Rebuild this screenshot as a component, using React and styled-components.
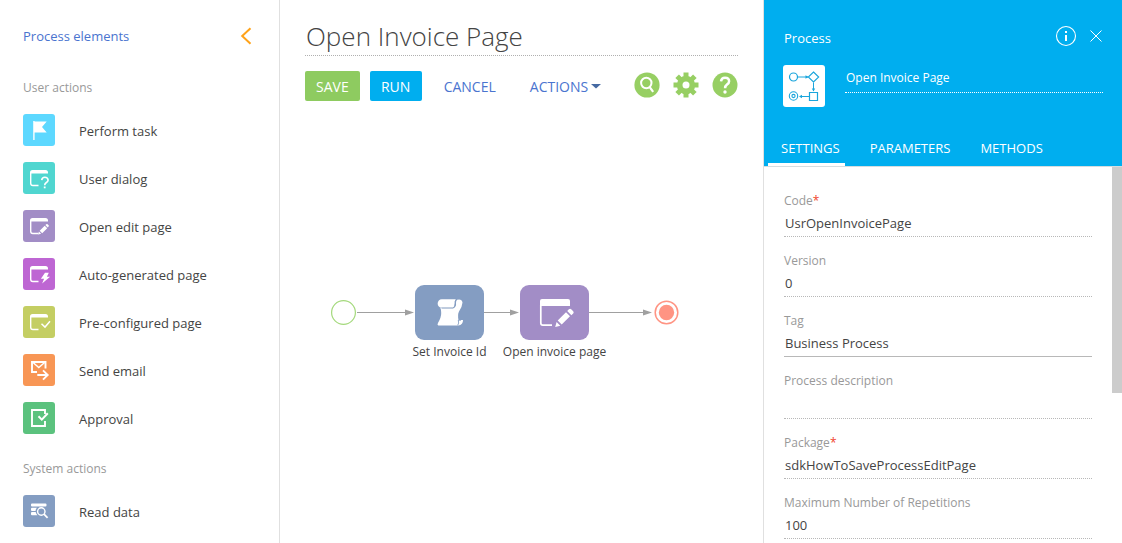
import React from "react";
import styled, { createGlobalStyle, css } from "styled-components";

const GlobalStyle = createGlobalStyle`
  *, *::before, *::after { box-sizing: border-box; }
  body {
    margin: 0;
    background: #fff;
    color: #444;
    font-family: "Open Sans", "Noto Sans", sans-serif;
    font-size: 13px;
    line-height: 20px;
  }
  button, input, textarea { font: inherit; color: inherit; }
`;

const bareButton = css`
  border: 0;
  padding: 0;
  margin: 0;
  background: none;
  cursor: pointer;
`;

const Shell = styled.div`
  display: flex;
  height: 100vh;
  overflow: hidden;
`;

/* ---------- Element palette ---------- */

const Palette = styled.aside`
  flex: 0 0 280px;
  padding: 26px 27px 0 23px;
  border-right: 1px solid #e0e0e0;
  overflow: hidden;
`;

const PaletteHeader = styled.header`
  display: flex;
  align-items: center;
  justify-content: space-between;
  height: 20px;
  margin-bottom: 32px;
`;

const PaletteTitle = styled.h2`
  margin: 0;
  font-size: 13px;
  font-weight: 400;
  color: #4a74cf;
`;

const CollapseButton = styled.button`
  ${bareButton}
  display: flex;
`;

const Section = styled.section`
  margin-bottom: 25px;
`;

const SectionTitle = styled.h3`
  margin: 0 0 16px;
  font-size: 12px;
  font-weight: 400;
  color: #999;
`;

const ElementList = styled.ul`
  display: flex;
  flex-direction: column;
  gap: 16px;
  margin: 0;
  padding: 0;
  list-style: none;
`;

const ElementButton = styled.button`
  ${bareButton}
  display: flex;
  align-items: center;
  gap: 24px;
  width: 100%;
  text-align: left;
`;

const ElementTile = styled.span`
  display: flex;
  width: 32px;
  height: 32px;
  border-radius: 3px;
  background: ${(p) => p.$color};
`;

const ElementName = styled.span`
  padding-top: 2px;
`;

/* ---------- Designer ---------- */

const Designer = styled.main`
  flex: 1;
  min-width: 0;
  display: flex;
  flex-direction: column;
`;

const DesignerHeader = styled.header`
  padding: 16px 25px 0;
`;

const TitleInput = styled.input`
  display: block;
  width: 100%;
  height: 40px;
  padding: 0 1px;
  border: 0;
  border-bottom: 1px dotted #b0b0b0;
  outline: 0;
  background: none;
  font-size: 26px;
  font-weight: 300;
`;

const Toolbar = styled.div`
  display: flex;
  align-items: flex-start;
  justify-content: space-between;
  margin-top: 15px;
`;

const ToolbarGroup = styled.div`
  display: flex;
  align-items: center;
  gap: ${(p) => p.$gap}px;
`;

const ActionButton = styled.button`
  ${bareButton}
  display: flex;
  align-items: center;
  justify-content: center;
  gap: 3px;
  min-width: 52px;
  height: 30px;
  padding: 2px ${(p) => (p.$fill ? 11 : 12)}px 0;
  border-radius: 2px;
  background: ${(p) => p.$fill || "none"};
  color: ${(p) => (p.$fill ? "#fff" : "#4a74cf")};
  font-size: 14px;
`;

const IconButton = styled.button`
  ${bareButton}
  display: flex;
`;

const Canvas = styled.div`
  position: relative;
  flex: 1;
  overflow: hidden;
`;

const Flows = styled.svg`
  position: absolute;
  left: 0;
  top: 0;
  overflow: visible;
`;

const Node = styled.div`
  position: absolute;
  left: ${(p) => p.$x}px;
  top: ${(p) => p.$y}px;
  display: flex;
  flex-direction: column;
  align-items: center;
  width: ${(p) => p.$w}px;
`;

const NodeBox = styled.div`
  display: flex;
  width: 69px;
  height: 55px;
  border-radius: 9px;
  background: ${(p) => p.$color};
`;

const NodeLabel = styled.span`
  margin-top: 2px;
  font-size: 12px;
  white-space: nowrap;
`;

/* ---------- Properties ---------- */

const Properties = styled.aside`
  flex: 0 0 359px;
  display: flex;
  flex-direction: column;
  border-left: 1px solid #e0e0e0;
`;

const PropertiesHeader = styled.header`
  flex: none;
  background: #00aeef;
  color: #fff;
  border-bottom: 1px solid #d5dde0;
`;

const HeaderTop = styled.div`
  display: flex;
  align-items: center;
  justify-content: space-between;
  padding: 24px 19px 0 20px;
`;

const PropertiesTitle = styled.h2`
  margin: 0;
  padding-top: 4px;
  font-size: 13px;
  font-weight: 400;
`;

const HeaderIdentity = styled.div`
  display: flex;
  align-items: flex-start;
  gap: 20px;
  padding: 17px 19px 0;
`;

const ProcessBadge = styled.div`
  display: flex;
  flex: none;
  width: 42px;
  height: 42px;
  border-radius: 3px;
  background: #fff;
`;

const NameInput = styled.input`
  flex: 1;
  min-width: 0;
  height: 28px;
  padding: 0 1px 2px;
  border: 0;
  border-bottom: 1px dotted #fff;
  outline: 0;
  background: none;
  color: #fff;
  font-size: 12px;
`;

const Tabs = styled.div`
  display: flex;
  gap: 12px;
  margin-top: 31px;
  padding-left: 4px;
`;

const Tab = styled.button`
  ${bareButton}
  height: 28px;
  padding: 0 5px 8px 13px;
  border-bottom: 3px solid ${(p) => (p.$active ? "#fff" : "transparent")};
`;

const PropertiesBody = styled.div`
  flex: 1;
  min-height: 0;
  display: flex;
  overflow: hidden;
`;

const Fields = styled.form`
  flex: 1;
  min-width: 0;
  display: flex;
  flex-direction: column;
  gap: 14px;
  padding: 24px 20px 0;
`;

const Field = styled.div`
  display: flex;
  flex-direction: column;
`;

const FieldLabel = styled.label`
  color: #999;
  font-size: 12px;
`;

const Required = styled.span`
  color: #f0442c;
`;

const fieldControl = css`
  width: 100%;
  border: 0;
  border-bottom: 1px ${(p) => (p.$solid ? "solid" : "dotted")} #b8b8b8;
  outline: 0;
  background: none;
  padding: 0 1px 2px;
`;

const FieldInput = styled.input`
  ${fieldControl}
  height: 26px;
`;

const FieldArea = styled.textarea`
  ${fieldControl}
  display: block;
  height: 28px;
  resize: none;
  overflow: hidden;
`;

const ScrollThumb = styled.div`
  flex: 0 0 10px;
  height: 60%;
  background: #ccc;
`;

/* ---------- Icons ---------- */

const Icon32 = ({ children }) => (
  <svg width="32" height="32" viewBox="0 0 32 32" fill="none" aria-hidden="true">{children}</svg>
);

const PageFrame = () => (
  <>
    <path d="M7 11.600V10.500a2.500 2.500 0 0 1 2.500-2.500h13a2.500 2.500 0 0 1 2.500 2.500V11.600z" fill="#fff" />
    <path d="M7.700 11v10.300q0 2.200 2.200 2.200h5.600" stroke="#fff" strokeWidth="1.400" />
  </>
);

const FlagIcon = () => (
  <Icon32>
    <path d="M10.200 7h1.400v19h-1.400z" fill="#fff" />
    <path d="M11 7.500h12.700L19 13l4.700 5.500H11z" fill="#fff" />
  </Icon32>
);

const DialogIcon = () => (
  <Icon32>
    <PageFrame />
    <path d="M18.700 18.200q.3-3 3.200-3t3.200 2.800q0 1.500-1.700 2.500-1.700 1-1.700 2.700" stroke="#fff" strokeWidth="1.600" />
    <path d="M20.800 24.500h1.800v1.800h-1.800z" fill="#fff" />
  </Icon32>
);

const EditPageIcon = () => (
  <Icon32>
    <PageFrame />
    <path d="M15.200 24.500l.7-2.900 2.200 2.200zM16.700 20.800l5-5 2.500 2.500-5 5zM22.400 15.100l.9-.9q.7-.5 1.300.1l1 1q.5.600 0 1.200l-.9.900z" fill="#fff" />
  </Icon32>
);

const AutoPageIcon = () => (
  <Icon32>
    <PageFrame />
    <path d="M22 14.800h3.800l-1.900 4h3.200l-8 6.700 2-4.700h-3.200z" fill="#fff" />
  </Icon32>
);

const ConfiguredPageIcon = () => (
  <Icon32>
    <PageFrame />
    <path d="M18.500 17.700l3.500 3.400 5-5.800" stroke="#fff" strokeWidth="1.500" />
  </Icon32>
);

const EmailIcon = () => (
  <Icon32>
    <path d="M14 18H9V8h13.500v6.500" stroke="#fff" strokeWidth="1.900" />
    <path d="M10 8.500l5.800 5 5.800-5" stroke="#fff" strokeWidth="1.400" />
    <path d="M14.300 21h9.500M20 16.300l4.700 4.700-4.700 4.700" stroke="#fff" strokeWidth="1.900" />
  </Icon32>
);

const ApprovalIcon = () => (
  <Icon32>
    <path d="M22 12V8H9v16h13v-5" stroke="#fff" strokeWidth="1.900" />
    <path d="M15.500 14.300l3.300 3.300 6-6.300" stroke="#fff" strokeWidth="2" />
  </Icon32>
);

const ReadDataIcon = () => (
  <Icon32>
    <path d="M9 8.500h13.500q1 0 1 1v1q0 1-1 1H9q-1 0-1-1v-1q0-1 1-1zM9 12.700h5q-1.300 1.300-1.500 3.200H9q-1 0-1-1v-1.200q0-1 1-1zM9 17h3.700q.4 1.800 1.700 3.200H9q-1 0-1-1V18q0-1 1-1z" fill="#fff" />
    <circle cx="18.300" cy="16.500" r="3.700" stroke="#fff" strokeWidth="1.400" />
    <path d="M21 19.200l3.600 3.600" stroke="#fff" strokeWidth="1.800" />
  </Icon32>
);

const ChevronLeftIcon = () => (
  <svg width="12" height="18" viewBox="0 0 12 18" fill="none" aria-hidden="true">
    <path d="M10.500 1.200L2.200 9l8.300 7.800" stroke="#ffa31a" strokeWidth="2" />
  </svg>
);

const CaretIcon = () => (
  <svg width="10" height="6" viewBox="0 0 10 6" aria-hidden="true">
    <path d="M0 0h10L5 4.500z" fill="#456aa3" />
  </svg>
);

const SearchIcon = () => (
  <svg width="26" height="28" viewBox="0 0 26 28" fill="none" aria-hidden="true">
    <circle cx="13" cy="14" r="12.600" fill="#97cf63" />
    <circle cx="12.300" cy="12" r="5.200" stroke="#fff" strokeWidth="2" />
    <path d="M15.500 15.800l3.700 5" stroke="#fff" strokeWidth="2.200" />
  </svg>
);

const GearIcon = () => (
  <svg width="26" height="28" viewBox="0 0 26 28" fill="none" aria-hidden="true">
    <g fill="#97cf63">
      {[0, 45, 90, 135].map((angle) => (
        <rect key={angle} x="10.500" y="1.500" width="5" height="25" transform={`rotate(${angle} 13 14)`} />
      ))}
      <circle cx="13" cy="14" r="9.200" />
    </g>
    <circle cx="13" cy="14" r="3.500" fill="#fff" />
  </svg>
);

const HelpIcon = () => (
  <svg width="26" height="28" viewBox="0 0 26 28" fill="none" aria-hidden="true">
    <circle cx="13" cy="14" r="12.500" fill="#97cf63" />
    <path d="M9 10.300q.4-3.600 4-3.600 4.100 0 4.100 3.500 0 1.800-2.100 3.400-1.900 1.400-1.900 3.600" stroke="#fff" strokeWidth="2.500" />
    <circle cx="13" cy="21" r="1.700" fill="#fff" />
  </svg>
);

const InfoIcon = () => (
  <svg width="22" height="22" viewBox="0 0 22 22" fill="none" aria-hidden="true">
    <circle cx="11" cy="11" r="9.500" stroke="#fff" strokeWidth="1.100" />
    <path d="M10 6h2v2h-2zM10 10h2v6h-2z" fill="#fff" />
  </svg>
);

const CloseIcon = () => (
  <svg width="14" height="14" viewBox="0 0 14 14" fill="none" aria-hidden="true">
    <path d="M1.500 1.500l11 11M12.500 1.500l-11 11" stroke="#fff" strokeWidth="1" />
  </svg>
);

const ProcessIcon = () => (
  <svg width="42" height="42" viewBox="0 0 42 42" fill="none" stroke="#1aa5dc" aria-hidden="true">
    <circle cx="10.500" cy="12" r="4" strokeWidth="1.200" />
    <path d="M14.500 12H25M30.500 17.500V26M26 31.500H17" />
    <path d="M22.500 10.300L25.500 12l-3 1.700zM28.800 23.500l1.700 3 1.700-3zM19 29.800l-3 1.700 3 1.700z" fill="#1aa5dc" stroke="none" />
    <path d="M30.500 7l5.200 5-5.200 5-5.200-5z" strokeWidth="1.100" />
    <path d="M26.500 27.500h8v8h-8z" strokeWidth="1.200" />
    <circle cx="10.500" cy="31" r="4.200" strokeWidth="1.100" />
    <circle cx="10.500" cy="31" r="1.600" strokeWidth="1.100" />
  </svg>
);

const ScrollGlyph = () => (
  <svg width="69" height="55" viewBox="0 0 69 55" fill="none" aria-hidden="true">
    <path
      d="M42 14.800Q46.800 13.500 47.500 17.500Q47.300 21.500 44 26.500Q42.300 30 43.600 35H48Q48.200 40 43.200 40.400H23.300Q21.800 40 23 38Q26.400 32 26.200 28Q26.200 24.500 25.400 23H38.500Q41.600 21.500 41 18Q40.900 16 42 14.800Z"
      fill="#fff"
    />
    <path
      d="M26.700 14.200H41Q39.300 16 39.700 18.500Q39.900 21 38 22.700H26.700A4 4.200 0 0 1 26.700 14.200Z"
      fill="#fff"
    />
    <path d="M26.500 23.100H38.400Q40.400 21.500 40.300 18.500Q39.900 16 41.200 14.300M43.300 35Q44.300 38.500 42.700 40.300M43.200 35.200H46" stroke="#849dc2" strokeWidth="0.900" />
  </svg>
);

const EditPageGlyph = () => (
  <svg width="69" height="55" viewBox="0 0 69 55" fill="none" aria-hidden="true">
    <path d="M20 21v-5q0-2 2-2h26q2 0 2 2v5z" fill="#fff" />
    <path d="M20.800 20v18q0 2.200 2 2.200H32" stroke="#fff" strokeWidth="1.700" />
    <path d="M35.200 42l1.400-5 3.700 3.700zM37.700 35.500l8.300-8.300 4 4-8.300 8.300zM47.200 26l1.700-1.700q1.200-1 2.300 0l2 2q1 1.200 0 2.300L51.400 30.200z" fill="#fff" />
  </svg>
);

/* ---------- Data ---------- */

const sections = [
  {
    title: "User actions",
    items: [
      { name: "Perform task", color: "#5dd8ff", Icon: FlagIcon },
      { name: "User dialog", color: "#50d6d0", Icon: DialogIcon },
      { name: "Open edit page", color: "#a28dc6", Icon: EditPageIcon },
      { name: "Auto-generated page", color: "#be66d3", Icon: AutoPageIcon },
      { name: "Pre-configured page", color: "#c4ce63", Icon: ConfiguredPageIcon },
      { name: "Send email", color: "#f89655", Icon: EmailIcon },
      { name: "Approval", color: "#5bc27e", Icon: ApprovalIcon },
    ],
  },
  {
    title: "System actions",
    items: [{ name: "Read data", color: "#849dc2", Icon: ReadDataIcon }],
  },
];

const fields = [
  { id: "code", label: "Code", value: "UsrOpenInvoicePage", required: true },
  { id: "version", label: "Version", value: "0" },
  { id: "tag", label: "Tag", value: "Business Process", solid: true },
  { id: "description", label: "Process description", value: "", multiline: true },
  { id: "package", label: "Package", value: "sdkHowToSaveProcessEditPage", required: true },
  { id: "repetitions", label: "Maximum Number of Repetitions", value: "100" },
];

const flows = [
  { from: 77, to: 134 },
  { from: 204, to: 239 },
  { from: 309, to: 372 },
];

export default function App() {
  return (
    <>
      <GlobalStyle />
      <Shell>
        <Palette>
          <PaletteHeader>
            <PaletteTitle>Process elements</PaletteTitle>
            <CollapseButton type="button" aria-label="Collapse">
              <ChevronLeftIcon />
            </CollapseButton>
          </PaletteHeader>
          {sections.map((section) => (
            <Section key={section.title}>
              <SectionTitle>{section.title}</SectionTitle>
              <ElementList>
                {section.items.map(({ name, color, Icon }) => (
                  <li key={name}>
                    <ElementButton type="button">
                      <ElementTile $color={color}><Icon /></ElementTile>
                      <ElementName>{name}</ElementName>
                    </ElementButton>
                  </li>
                ))}
              </ElementList>
            </Section>
          ))}
        </Palette>

        <Designer>
          <DesignerHeader>
            <TitleInput aria-label="Process title" defaultValue="Open Invoice Page" />
            <Toolbar>
              <ToolbarGroup $gap={10}>
                <ActionButton type="button" $fill="#8ecb60">SAVE</ActionButton>
                <ActionButton type="button" $fill="#00aeef">RUN</ActionButton>
                <ActionButton type="button">CANCEL</ActionButton>
                <ActionButton type="button">ACTIONS <CaretIcon /></ActionButton>
              </ToolbarGroup>
              <ToolbarGroup $gap={13}>
                <IconButton type="button" aria-label="Search"><SearchIcon /></IconButton>
                <IconButton type="button" aria-label="Settings"><GearIcon /></IconButton>
                <IconButton type="button" aria-label="Help"><HelpIcon /></IconButton>
              </ToolbarGroup>
            </Toolbar>
          </DesignerHeader>

          <Canvas>
            <Flows width="400" height="300" viewBox="0 0 400 300" fill="none" aria-hidden="true">
              {flows.map(({ from, to }) => (
                <g key={from}>
                  <path d={`M${from} 211.500H${to - 8}`} stroke="#a0a0a0" />
                  <path d={`M${to} 211.500l-9-3v6z`} fill="#a0a0a0" />
                </g>
              ))}
            </Flows>
            <Node $x={51} $y={199} $w={25}>
              <svg width="25" height="25" viewBox="0 0 25 25" fill="none" role="img" aria-label="Start">
                <circle cx="12.500" cy="12.500" r="11.900" stroke="#a4d97c" strokeWidth="1.200" />
              </svg>
            </Node>
            <Node $x={135} $y={184} $w={69}>
              <NodeBox $color="#849dc2"><ScrollGlyph /></NodeBox>
              <NodeLabel>Set Invoice Id</NodeLabel>
            </Node>
            <Node $x={240} $y={184} $w={69}>
              <NodeBox $color="#a28dc6"><EditPageGlyph /></NodeBox>
              <NodeLabel>Open invoice page</NodeLabel>
            </Node>
            <Node $x={374} $y={199} $w={25}>
              <svg width="25" height="25" viewBox="0 0 25 25" fill="none" role="img" aria-label="End">
                <circle cx="12.500" cy="12.500" r="11.300" stroke="#ff9483" strokeWidth="1.500" />
                <circle cx="12.500" cy="12.500" r="7.700" fill="#ff9483" />
              </svg>
            </Node>
          </Canvas>
        </Designer>

        <Properties>
          <PropertiesHeader>
            <HeaderTop>
              <PropertiesTitle>Process</PropertiesTitle>
              <ToolbarGroup $gap={12}>
                <IconButton type="button" aria-label="Information"><InfoIcon /></IconButton>
                <IconButton type="button" aria-label="Close"><CloseIcon /></IconButton>
              </ToolbarGroup>
            </HeaderTop>
            <HeaderIdentity>
              <ProcessBadge><ProcessIcon /></ProcessBadge>
              <NameInput aria-label="Process name" defaultValue="Open Invoice Page" />
            </HeaderIdentity>
            <Tabs role="tablist">
              <Tab type="button" role="tab" aria-selected="true" $active>SETTINGS</Tab>
              <Tab type="button" role="tab" aria-selected="false">PARAMETERS</Tab>
              <Tab type="button" role="tab" aria-selected="false">METHODS</Tab>
            </Tabs>
          </PropertiesHeader>
          <PropertiesBody>
            <Fields>
              {fields.map((field) => (
                <Field key={field.id}>
                  <FieldLabel htmlFor={field.id}>
                    {field.label}
                    {field.required && <Required>*</Required>}
                  </FieldLabel>
                  {field.multiline ? (
                    <FieldArea id={field.id} defaultValue={field.value} />
                  ) : (
                    <FieldInput id={field.id} defaultValue={field.value} $solid={field.solid} />
                  )}
                </Field>
              ))}
            </Fields>
            <ScrollThumb />
          </PropertiesBody>
        </Properties>
      </Shell>
    </>
  );
}
